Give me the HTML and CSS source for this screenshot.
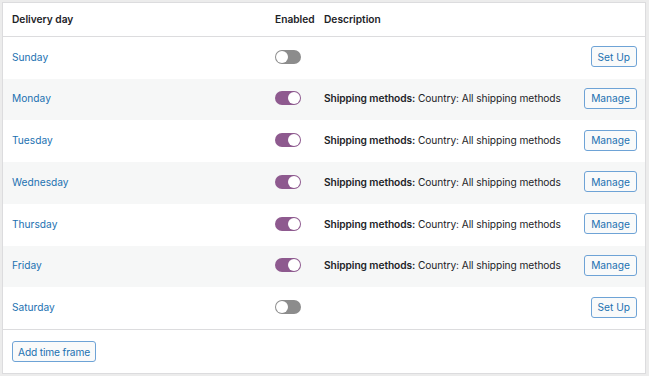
FILE: index.html
```html
<!DOCTYPE html>
<html lang="en">
<head>
    <meta charset="UTF-8">
    <meta name="viewport" content="width=device-width, initial-scale=1.0">
    <title>Delivery days</title>
<link rel="stylesheet" href="styles.css">
</head>
<body>
    <div class="days-table">
        <div class="row head">
            <div>Delivery day</div>
            <div>Enabled</div>
            <div>Description</div>
            <div></div>
        </div>

        <div class="row">
            <a href="#" class="day">Sunday</a>
            <span class="toggle"></span>
            <div></div>
            <button class="btn">Set Up</button>
        </div>
        <div class="row alt">
            <a href="#" class="day">Monday</a>
            <span class="toggle on"></span>
            <div class="desc"><b>Shipping methods:</b> Country: All shipping methods</div>
            <button class="btn">Manage</button>
        </div>
        <div class="row">
            <a href="#" class="day">Tuesday</a>
            <span class="toggle on"></span>
            <div class="desc"><b>Shipping methods:</b> Country: All shipping methods</div>
            <button class="btn">Manage</button>
        </div>
        <div class="row alt">
            <a href="#" class="day">Wednesday</a>
            <span class="toggle on"></span>
            <div class="desc"><b>Shipping methods:</b> Country: All shipping methods</div>
            <button class="btn">Manage</button>
        </div>
        <div class="row">
            <a href="#" class="day">Thursday</a>
            <span class="toggle on"></span>
            <div class="desc"><b>Shipping methods:</b> Country: All shipping methods</div>
            <button class="btn">Manage</button>
        </div>
        <div class="row alt">
            <a href="#" class="day">Friday</a>
            <span class="toggle on"></span>
            <div class="desc"><b>Shipping methods:</b> Country: All shipping methods</div>
            <button class="btn">Manage</button>
        </div>
        <div class="row">
            <a href="#" class="day">Saturday</a>
            <span class="toggle"></span>
            <div></div>
            <button class="btn">Set Up</button>
        </div>

        <div class="foot">
            <button class="btn">Add time frame</button>
        </div>
    </div>
</body>
</html>
```

FILE: styles.css
```css
body {
    margin: 0;
    padding: 2px 3px 2px 2px;
    background: #ececec;
    font-family: Inter, 'Noto Sans', Arial, sans-serif;
    font-size: 10.2px;
    color: #1d2327;
}
.days-table {
    background: #fff;
    border: 1px solid #dcdcde;
    height: 370px;
    display: flex;
    flex-direction: column;
}
.row {
    display: grid;
    grid-template-columns: 263px 49px 1fr auto;
    align-items: center;
    height: 42px;
    padding: 0 8px 2px 9px;
    box-sizing: border-box;
    white-space: nowrap;
}
.row.head {
    height: 34px;
    padding-bottom: 1px;
    border-bottom: 1px solid #dcdcde;
    font-weight: 600;
}
.row.alt {
    background: #f6f7f7;
}
.day,
.day:visited {
    color: #2271b1;
    text-decoration: none;
}
.desc {
    letter-spacing: -0.08px;
}
.desc b {
    font-weight: 600;
}
.toggle {
    position: relative;
    width: 26px;
    height: 14px;
    border-radius: 7px;
    background: #8c8c8c;
}
.toggle::after {
    content: "";
    position: absolute;
    left: 1px;
    top: 1px;
    width: 12px;
    height: 12px;
    border-radius: 50%;
    background: #fff;
}
.toggle.on {
    background: #8e5a8f;
}
.toggle.on::after {
    left: 13px;
}
.btn {
    font-family: inherit;
    font-size: 10.2px;
    color: #2271b1;
    background: #f9fafa;
    border: 1px solid #6ea3d6;
    border-radius: 3px;
    height: 21px;
    padding: 0 6px;
    cursor: pointer;
}
.foot .btn {
    padding: 0 5px;
    letter-spacing: -0.15px;
}
.foot {
    border-top: 1px solid #dcdcde;
    padding: 11px 9px;
}
```
